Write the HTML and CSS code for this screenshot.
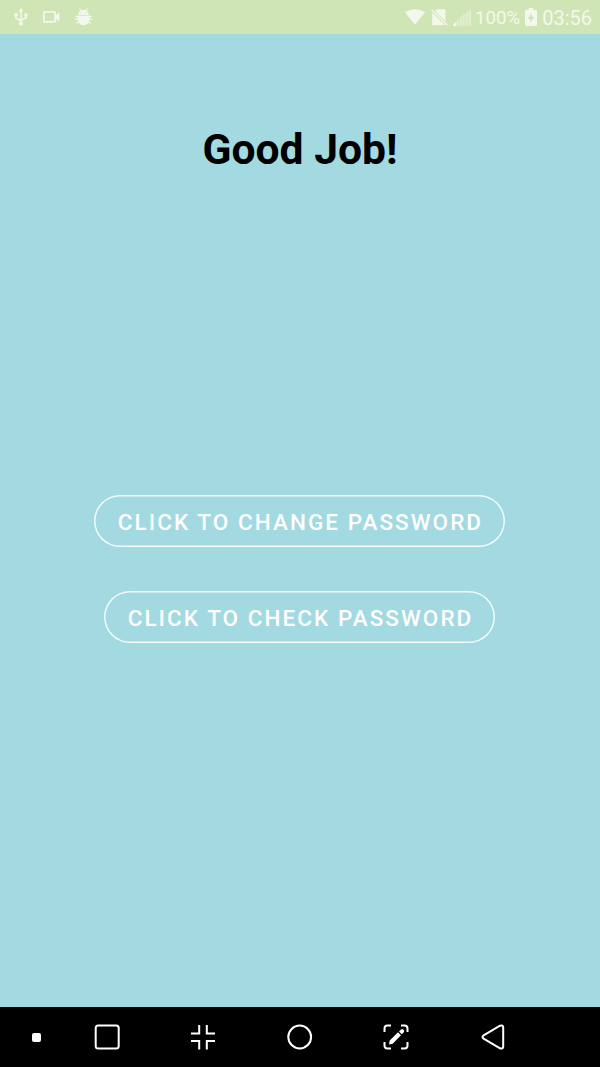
FILE: index.html
```html
<!DOCTYPE html>
<html lang="en">
<head>
<meta charset="utf-8">
<title>Good Job!</title>
<link rel="stylesheet" href="styles.css">
</head>
<body>
<div class="screen">
  <header class="status">
    <div class="notifications">
      <svg width="14" height="18" viewBox="0 0 14 18" fill="none" stroke="currentColor" stroke-width="1.5"><path d="M7 2v14M2 7v3.2L7 13M12 7v3L7 12"/><path d="M7 0l2.5 3.5h-5zM10.3 5.4h3.2v3.2h-3.2z" fill="currentColor" stroke="none"/><circle cx="2" cy="6.7" r="1.8" fill="currentColor" stroke="none"/><circle cx="7" cy="15.6" r="2.1" fill="currentColor" stroke="none"/></svg>
      <svg width="17" height="12" viewBox="0 0 17 12"><rect x=".9" y=".9" width="11.2" height="10" rx=".8" fill="none" stroke="currentColor" stroke-width="1.7"/><path d="M12 5l4.3-3.7v9.2L12 7z" fill="currentColor"/></svg>
      <svg width="17" height="18" viewBox="0 0 17 18" fill="currentColor"><path d="M3.200 7c0-2 1-3.600 2.300-4.300L4 .7l.8-.6 1.800 2.100a6 6 0 0 1 3.800 0L12.200.1l.8.6-1.500 2c1.300.7 2.300 2.300 2.300 4.300z"/><path d="M.3 7.800h16.400v1.400h-2.400v1.600H17v1.300h-2.800l-.3 1.200 2.100 1.500-.8 1-2-1.400c-1 1.700-2.700 2.700-4.700 2.700s-3.700-1-4.700-2.700l-2 1.400-.8-1 2.100-1.500-.3-1.200H0v-1.300h2.700V9.200H.3z"/><circle cx="6.200" cy="4.900" r=".7" class="eye"/><circle cx="10.800" cy="4.900" r=".7" class="eye"/></svg>
    </div>
    <div class="system">
      <svg width="20" height="16" viewBox="0 0 20 16"><path d="M0 3.200C5.500-.9 14.500-.9 20 3.200L10 15.700z" fill="currentColor"/></svg>
      <svg class="sim" width="17" height="17" viewBox="0 0 17 17" fill="currentColor"><path d="M4.200 2L6 .3h7.500q1 0 1 1v11.200zM1.200 3.500l12.700 12.700H2.200q-1 0-1-1z"/><path d="M.2 1.300l1-1L16.800 15.700l-1 1z"/></svg>
      <svg class="signal" width="18" height="17" viewBox="0 0 18 17" fill="currentColor"><path d="M0 17v-1.500l3-2.500v4z"/><path opacity=".5" d="M3.600 17v-5l2.200-2V17zM6.600 17V9l2.200-2v10zM9.600 17V6.500l2.200-2V17zM12.600 17V4l2.200-2v15zM15.600 17V1.800L18 0v17z"/></svg>
      <span class="percent">100%</span>
      <svg class="battery" width="12" height="18" viewBox="0 0 12 18"><path d="M3.700 0h4.600v2H11q1 0 1 1v14q0 1-1 1H1q-1 0-1-1V3q0-1 1-1h2.700z" fill="currentColor"/><path class="bolt" d="M6.800 5L2.600 11h2.700v4l4-6.200H6.700z"/></svg>
      <span class="clock">03:56</span>
    </div>
  </header>
  <main class="content">
    <h1 class="title">Good Job!</h1>
    <button class="pill change">CLICK TO CHANGE PASSWORD</button>
    <button class="pill check">CLICK TO CHECK PASSWORD</button>
  </main>
  <nav class="navbar">
    <span class="cell dot-cell"><span class="dot"></span></span>
    <span class="cell"><svg width="26" height="26" viewBox="0 0 26 26"><rect x="1.700" y="1.500" width="23" height="23" rx="2.500"/></svg></span>
    <span class="cell"><svg width="26" height="26" viewBox="0 0 26 26"><path d="M1 9.500h8.200V1M25 9.500h-8.200V1M1 17h8.200v8.500M25 17h-8.200v8.500"/></svg></span>
    <span class="cell"><svg width="26" height="26" viewBox="0 0 26 26"><circle cx="12.700" cy="13" r="11.400"/></svg></span>
    <span class="cell"><svg width="26" height="26" viewBox="0 0 26 26"><path d="M1.500 8V4.500q0-3 3-3H8M18 1.500h3.500q3 0 3 3V8M24.500 18v3.500q0 3-3 3H18M8 24.500H4.500q-3 0-3-3V18"/><path class="solid" d="M6 20.500l.7-3.900L15 8.300l3 3-8.300 8.400zM16 7.500l1.800-1.800q1.400-1.200 2.800 0t0 2.800l-1.800 1.800z"/></svg></span>
    <span class="cell"><svg width="26" height="26" viewBox="0 0 26 26"><path d="M3.600 11.400L20 1.700q3.200-1.100 3.200 1.700v19.200q0 2.800-3.200 1.700L3.600 14.600q-2.200-1.600 0-3.200z"/></svg></span>
  </nav>
</div>
</body>
</html>
```
FILE: styles.css
```css
* { box-sizing: border-box; }
body { margin: 0; font-family: Roboto, "Liberation Sans", sans-serif; }
svg { display: block; flex: none; }
.screen { display: flex; flex-direction: column; width: 600px; height: 1067px; background: #a3d9e1; overflow: hidden; }
.status { display: flex; justify-content: space-between; height: 34px; padding: 0 8px 0 14px; background: #d0e5b5; color: #f4f8ec; }
.notifications, .system { display: flex; align-items: center; }
.notifications { gap: 15px; }
.eye, .bolt { fill: #d0e5b5; }
.sim { margin-left: 6px; }
.signal { margin-left: 5px; }
.percent { margin-left: 4px; font-size: 18.700px; line-height: 34px; padding-top: 1px; }
.battery { margin-left: 5px; }
.clock { margin-left: 5px; font-size: 20px; line-height: 34px; padding-top: 1px; }
.content { flex: 1; display: flex; flex-direction: column; align-items: center; }
.title { margin: 89px 0 0; font-size: 42.600px; line-height: 52px; font-weight: 700; color: #000; }
.pill { height: 52px; padding: 1px 0 0 2px; border: 0; box-shadow: inset 0 0 0 1.500px #f3fbfc; border-radius: 26px; background: transparent; color: #fff; font: 500 22.500px/28px Roboto, "Liberation Sans", sans-serif; letter-spacing: 2.050px; white-space: nowrap; }
.change { width: 411px; margin: 320px 1px 0 0; }
.check { width: 391px; margin: 44px 1px 0 0; }
.navbar { display: flex; height: 60px; background: #000; }
.cell { display: flex; align-items: center; justify-content: center; width: 96.500px; }
.dot-cell { width: 58.500px; padding-left: 14px; }
.dot { width: 9px; height: 9px; border-radius: 2px; background: #fff; }
.navbar svg { fill: none; stroke: #fff; stroke-width: 2; }
.navbar .solid { fill: #fff; stroke: none; }
```
